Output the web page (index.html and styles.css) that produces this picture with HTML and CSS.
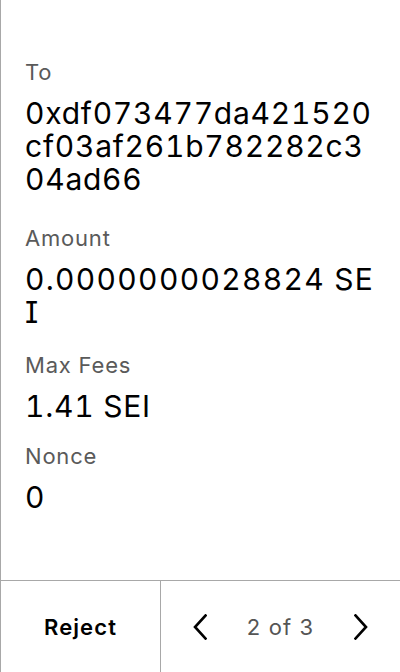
FILE: index.html
```html
<!DOCTYPE html>
<html>
<head>
<meta charset="utf-8">
<link rel="stylesheet" href="styles.css">
</head>
<body>
<div class="screen">
  <main class="fields">
    <section class="field field-to">
      <div class="label">To</div>
      <div class="value">0xdf073477da421520cf03af261b782282c304ad66</div>
    </section>
    <section class="field field-amount">
      <div class="label">Amount</div>
      <div class="value">0.0000000028824 SEI</div>
    </section>
    <section class="field field-fees">
      <div class="label">Max Fees</div>
      <div class="value">1.41 SEI</div>
    </section>
    <section class="field field-nonce">
      <div class="label">Nonce</div>
      <div class="value">0</div>
    </section>
  </main>
  <footer class="footer">
    <div class="reject">Reject</div>
    <div class="pager">
      <svg class="chev" width="14" height="26" viewBox="0 0 14 26"><path d="M12.5 1.5 L2 13 L12.5 24.5" fill="none" stroke="#000" stroke-width="2.6" stroke-linecap="square"/></svg>
      <span class="count">2 of 3</span>
      <svg class="chev" width="14" height="26" viewBox="0 0 14 26"><path d="M1.5 1.5 L12 13 L1.5 24.5" fill="none" stroke="#000" stroke-width="2.6" stroke-linecap="square"/></svg>
    </div>
  </footer>
</div>
</body>
</html>
```
FILE: styles.css
```css
html, body {
  margin: 0;
  padding: 0;
  background: #fff;
}
body {
  font-family: Inter, "Noto Sans", sans-serif;
  color: #000;
}
.screen {
  width: 400px;
  height: 672px;
  box-sizing: border-box;
  border-left: 1px solid #a8a8a8;
  display: flex;
  flex-direction: column;
}
.fields {
  flex: 1;
  padding: 58px 24px 0 24px;
}
.field-to { margin-bottom: 28px; }
.field-amount { margin-bottom: 22px; }
.field-fees { margin-bottom: 19px; }
.label {
  font-size: 22px;
  line-height: 28px;
  letter-spacing: 0.8px;
  color: #5a5a5a;
}
.value {
  font-size: 30px;
  line-height: 33px;
  margin-top: 11px;
  word-break: break-all;
  letter-spacing: 0.75px;
  font-variant-numeric: tabular-nums;
}
.field-amount .value {
  letter-spacing: 1.3px;
  font-feature-settings: "tnum" 1, "cv08" 1;
}
.footer {
  height: 91px;
  border-top: 1px solid #a8a8a8;
  display: flex;
}
.reject {
  width: 159px;
  border-right: 1px solid #a8a8a8;
  display: flex;
  align-items: center;
  justify-content: center;
  font-weight: 600;
  font-size: 22px;
  letter-spacing: 1.1px;
}
.pager {
  flex: 1;
  display: flex;
  align-items: center;
  justify-content: space-between;
  padding: 0 32px;
}
.count {
  font-size: 22px;
  letter-spacing: 1.1px;
  color: #555;
}
.chev {
  display: block;
}
```
